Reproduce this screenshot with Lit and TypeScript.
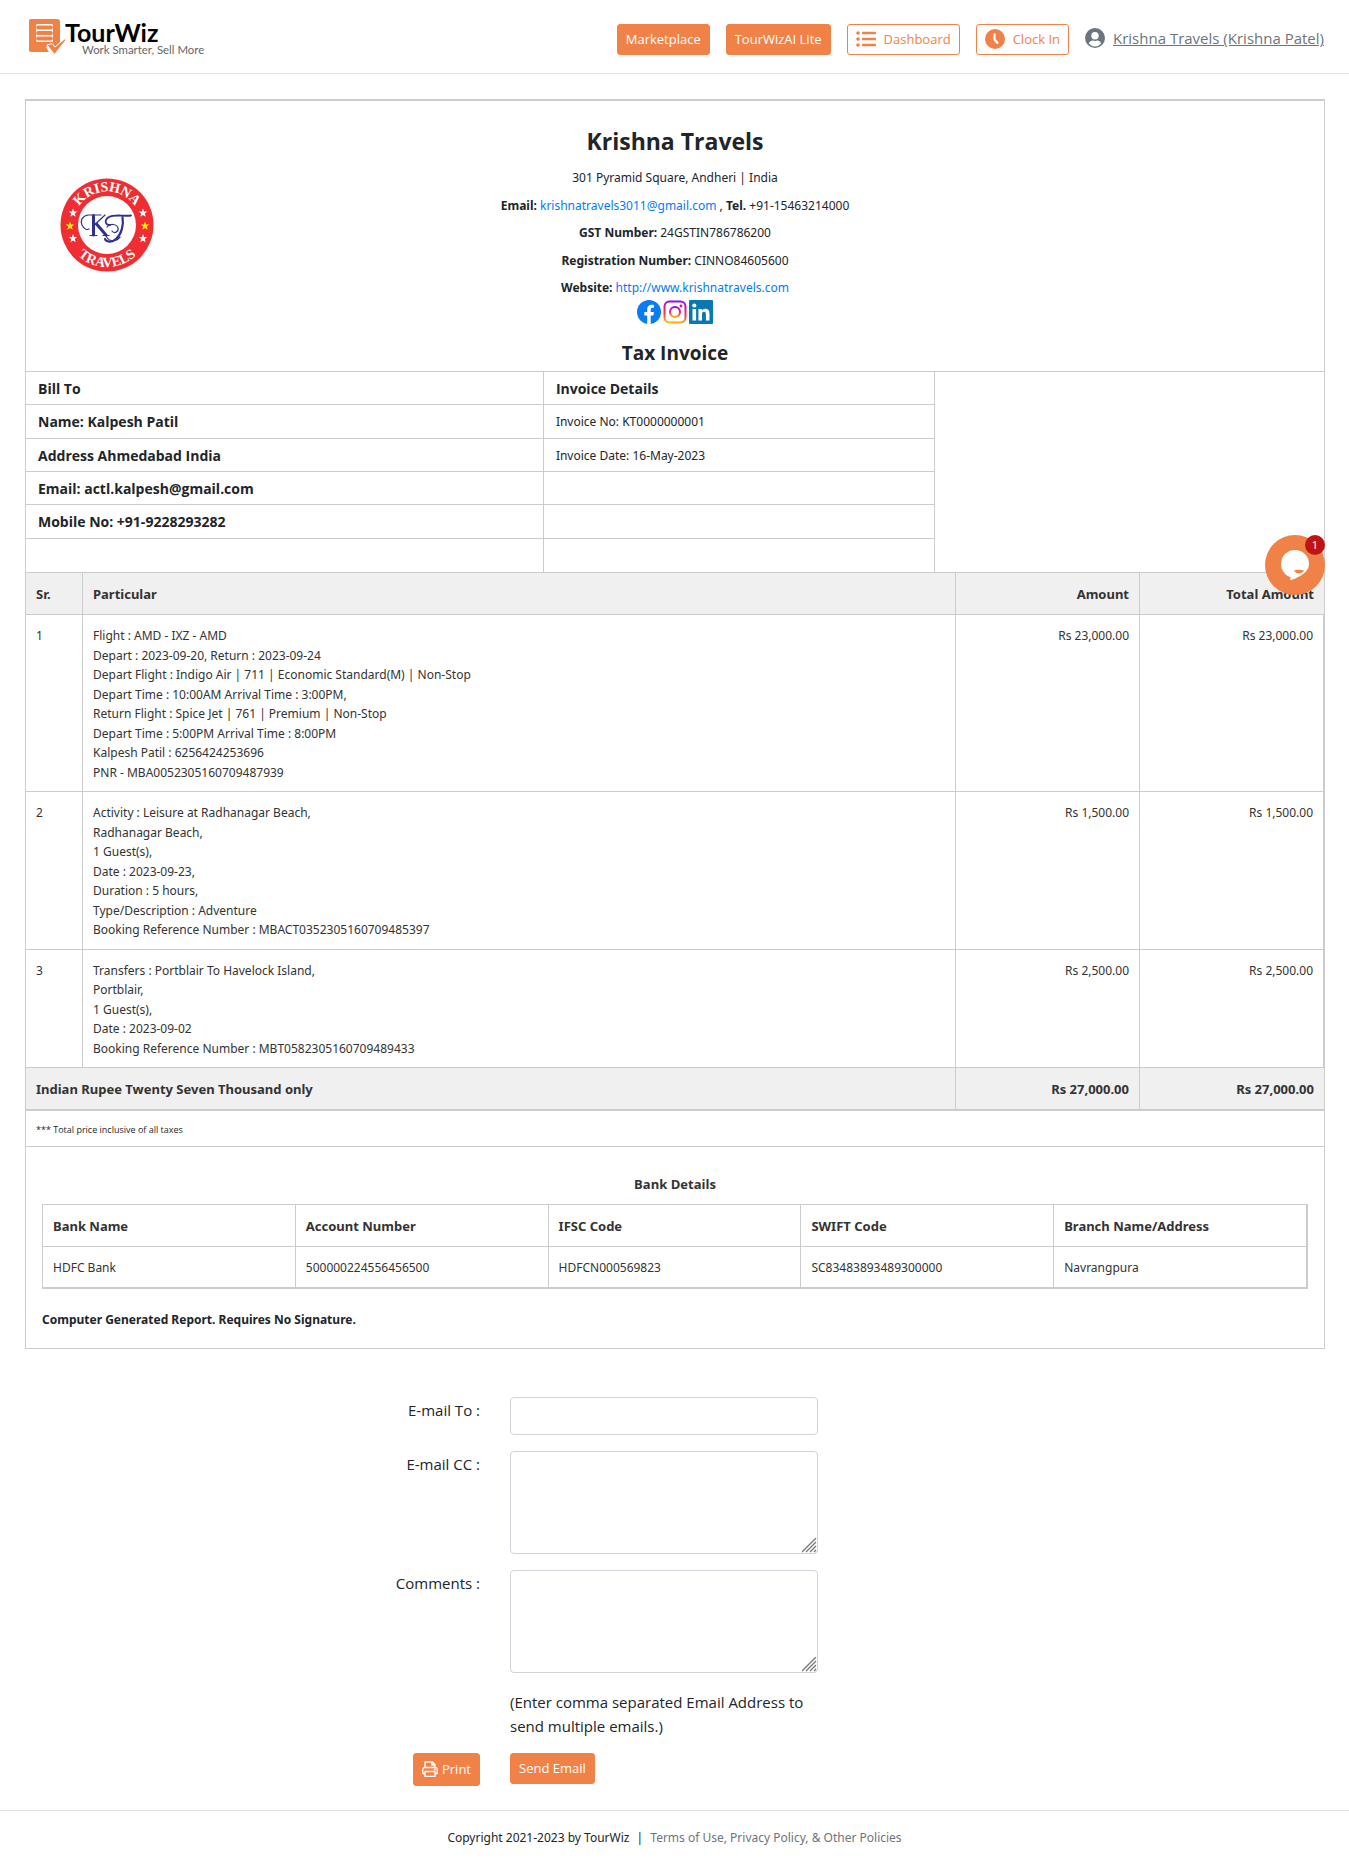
import { LitElement, html, css, svg, nothing } from "lit";
import { customElement } from "lit/decorators.js";

interface Item {
  lines: string[];
  amount: string;
  total: string;
}

const ITEMS: Item[] = [
  {
    lines: [
      "Flight : AMD - IXZ - AMD",
      "Depart : 2023-09-20, Return : 2023-09-24",
      "Depart Flight : Indigo Air | 711 | Economic Standard(M) | Non-Stop",
      "Depart Time : 10:00AM Arrival Time : 3:00PM,",
      "Return Flight : Spice Jet | 761 | Premium | Non-Stop",
      "Depart Time : 5:00PM Arrival Time : 8:00PM",
      "Kalpesh Patil : 6256424253696",
      "PNR - MBA0052305160709487939",
    ],
    amount: "Rs 23,000.00",
    total: "Rs 23,000.00",
  },
  {
    lines: [
      "Activity : Leisure at Radhanagar Beach,",
      "Radhanagar Beach,",
      "1 Guest(s),",
      "Date : 2023-09-23,",
      "Duration : 5 hours,",
      "Type/Description : Adventure",
      "Booking Reference Number : MBACT0352305160709485397",
    ],
    amount: "Rs 1,500.00",
    total: "Rs 1,500.00",
  },
  {
    lines: [
      "Transfers : Portblair To Havelock Island,",
      "Portblair,",
      "1 Guest(s),",
      "Date : 2023-09-02",
      "Booking Reference Number : MBT0582305160709489433",
    ],
    amount: "Rs 2,500.00",
    total: "Rs 2,500.00",
  },
];

const DETAILS: [string, string][] = [
  ["Name: Kalpesh Patil", "Invoice No: KT0000000001"],
  ["Address Ahmedabad India", "Invoice Date: 16-May-2023"],
  ["Email: actl.kalpesh@gmail.com", ""],
  ["Mobile No: +91-9228293282", ""],
  ["", ""],
];

const BANK: [string, string][] = [
  ["Bank Name", "HDFC Bank"],
  ["Account Number", "500000224556456500"],
  ["IFSC Code", "HDFCN000569823"],
  ["SWIFT Code", "SC83483893489300000"],
  ["Branch Name/Address", "Navrangpura"],
];

const star = (x: number, y: number, r: number, fill: string) => {
  const pts: string[] = [];
  for (let i = 0; i < 10; i++) {
    const a = -Math.PI / 2 + (i * Math.PI) / 5;
    const k = i % 2 ? r * 0.42 : r;
    pts.push(`${(x + k * Math.cos(a)).toFixed(2)},${(y + k * Math.sin(a)).toFixed(2)}`);
  }
  return svg`<polygon points=${pts.join(" ")} fill=${fill}></polygon>`;
};

const base = css`
  * {
    box-sizing: border-box;
  }
  svg {
    display: block;
    flex: none;
  }
  a {
    color: #007bff;
    text-decoration: none;
  }
  .btn {
    display: inline-flex;
    align-items: center;
    height: 31px;
    padding: 0 8px;
    border: 1px solid #f18247;
    border-radius: 3px;
    background: #f18247;
    color: #fff;
    font-family: inherit;
    font-size: 13px;
    line-height: 21px;
    white-space: nowrap;
    cursor: pointer;
  }
`;

@customElement("site-header")
export class SiteHeader extends LitElement {
  static styles = [
    base,
    css`
      :host {
        display: block;
      }
      .bar {
        display: flex;
        align-items: center;
        justify-content: space-between;
        height: 74px;
        padding: 5px 25px 0 28px;
        border-bottom: 1px solid #dee2e6;
      }
      .brand {
        margin-top: -4px;
      }
      nav {
        display: flex;
        align-items: center;
        gap: 16px;
      }
      .outline {
        gap: 8px;
        background: #fff;
        color: #f18247;
      }
      .user {
        display: flex;
        align-items: center;
        gap: 8px;
        padding-bottom: 2px;
        color: #6c757d;
        font-size: 15px;
        line-height: 24px;
      }
      .user span {
        text-decoration: underline;
      }
    `,
  ];

  render() {
    return html`
      <header class="bar">
        <a class="brand" href="#" aria-label="TourWiz home">
          <svg width="180" height="40" viewBox="0 0 180 40">
            <path
              fill="#f18247"
              fill-rule="evenodd"
              d="M3 2h26a3 3 0 0 1 3 3v20l-4 5-6-3-4 3 3 5H3a2 2 0 0 1-2-2V4a2 2 0 0 1 2-2zM9 7a2 2 0 0 0-1 1v15a2 2 0 0 0 2 2h14a1 1 0 0 0 1-1V9a2 2 0 0 0-1-2z"
            ></path>
            <path
              d="M10 10.500h13M10 16h13M10 21.500h13"
              stroke="#f18247"
              stroke-width="3.800"
              stroke-linecap="round"
            ></path>
            <path
              fill="#f18247"
              stroke="#fff"
              stroke-width="1"
              d="M19 28l5-1.500 3 3.500 9.500-8L38 23 26.500 37.500z"
            ></path>
            <text x="37" y="25" font-family="Lato" font-weight="700" font-size="25" fill="#000">TourWiz</text>
            <text x="54" y="37" font-family="Lato" font-size="11.400" fill="#666">Work Smarter, Sell More</text>
          </svg>
        </a>
        <nav>
          <button class="btn" type="button">Marketplace</button>
          <button class="btn" type="button">TourWizAI Lite</button>
          <button class="btn outline" type="button">
            <svg width="20" height="16" viewBox="0 0 20 16" fill="#f18247">
              <circle cx="2" cy="2" r="1.800"></circle>
              <circle cx="2" cy="8" r="1.800"></circle>
              <circle cx="2" cy="14" r="1.800"></circle>
              <rect x="6" y="0.700" width="14" height="2.600" rx="0.500"></rect>
              <rect x="6" y="6.700" width="14" height="2.600" rx="0.500"></rect>
              <rect x="6" y="12.700" width="14" height="2.600" rx="0.500"></rect>
            </svg>
            Dashboard
          </button>
          <button class="btn outline" type="button">
            <svg width="20" height="20" viewBox="0 0 20 20">
              <circle cx="10" cy="10" r="10" fill="#f18247"></circle>
              <path d="M9.500 4.500v6l3.500 4" fill="none" stroke="#fff" stroke-width="2.200"></path>
            </svg>
            Clock In
          </button>
          <a class="user" href="#">
            <svg width="20" height="20" viewBox="0 0 20 20">
              <circle cx="10" cy="10" r="10" fill="#6c757d"></circle>
              <circle cx="10" cy="7.700" r="3.700" fill="#fff"></circle>
              <path d="M3.800 15.600c1-2.300 2.400-3 3.900-3 1.500.6 3.100.6 4.600 0 1.500 0 2.900.7 3.900 3a8 8 0 0 1-12.400 0z" fill="#fff"></path>
            </svg>
            <span>Krishna Travels (Krishna Patel)</span>
          </a>
        </nav>
      </header>
    `;
  }
}

@customElement("company-header")
export class CompanyHeader extends LitElement {
  static styles = [
    base,
    css`
      :host {
        display: block;
      }
      .top {
        display: grid;
        grid-template-columns: 1fr 2fr 1fr;
        align-items: center;
        height: 271px;
        border-bottom: 1px solid #ccc;
      }
      .logo {
        padding: 0 0 22px 34px;
      }
      .center {
        display: flex;
        flex-direction: column;
        align-items: center;
        align-self: start;
        padding-top: 21px;
        text-align: center;
      }
      h1,
      h2,
      p {
        margin: 0;
      }
      h1 {
        margin-bottom: 3px;
        font-size: 23px;
        line-height: 39px;
      }
      h2 {
        margin-top: 17px;
        font-size: 19px;
        line-height: 24px;
      }
      p {
        font-family: "Noto Sans", sans-serif;
        font-size: 12px;
        line-height: 2.300;
      }
      .social {
        display: flex;
        gap: 2px;
        margin-top: -2px;
      }
    `,
  ];

  render() {
    return html`
      <div class="top">
        <div class="logo">
          <svg width="94" height="94" viewBox="0 0 94 94">
            <circle cx="47" cy="47" r="46.500" fill="#ee2e33"></circle>
            <circle cx="47" cy="47" r="29" fill="#fff"></circle>
            <defs>
              <path id="arc-top" d="M13.500 47a33.500 33.500 0 0 1 67 0"></path>
              <path id="arc-bottom" d="M5 47a42 42 0 0 0 84 0"></path>
            </defs>
            <g font-family="Liberation Serif" font-weight="700" font-size="14" fill="#fff" text-anchor="middle">
              <text><textPath href="#arc-top" startOffset="50%">KRISHNA</textPath></text>
              <text><textPath href="#arc-bottom" startOffset="50%">TRAVELS</textPath></text>
            </g>
            ${star(13, 35, 4.500, "#fff")} ${star(10, 48, 4.500, "#fff200")} ${star(13, 60.500, 4.500, "#fff")}
            ${star(83, 35, 4.500, "#fff")} ${star(85, 48, 4.500, "#fff200")} ${star(83, 60.500, 4.500, "#fff")}
            <g fill="none" stroke="#2e3192" stroke-linecap="round">
              <path d="M33.500 37.500V57" stroke-width="3"></path>
              <path d="M30 57.500h7M43 57.500h6" stroke-width="1.200"></path>
              <path d="M45 37 35 46.500" stroke-width="1.200"></path>
              <path d="M36.500 46 46 57" stroke-width="3"></path>
              <path d="M41 37H28c-6 1-8 6-6 10s5 5 7 4" stroke-width="1.200"></path>
              <path d="M71 37.500c-7 1-17-1.500-22 1.500s-4 8 1 8" stroke-width="1.800"></path>
              <path d="M62.500 39c1.500 8-1 17-6.500 22-4 4-10 3-11 0" stroke-width="2.200"></path>
              <path d="M46 57c1 6 9 8 14 2M47 49c3-4 10-3 11 1s-4 6-6 3" stroke-width="1.200"></path>
            </g>
          </svg>
        </div>
        <div class="center">
          <h1>Krishna Travels</h1>
          <p>301 Pyramid Square, Andheri | India</p>
          <p>
            <b>Email:</b> <a href="mailto:krishnatravels3011@gmail.com">krishnatravels3011@gmail.com</a> ,
            <b>Tel.</b> +91-15463214000
          </p>
          <p><b>GST Number:</b> 24GSTIN786786200</p>
          <p><b>Registration Number:</b> CINNO84605600</p>
          <p><b>Website:</b> <a href="http://www.krishnatravels.com">http://www.krishnatravels.com</a></p>
          <div class="social">
            <a href="#" aria-label="Facebook">
              <svg width="24" height="24" viewBox="0 0 24 24">
                <circle cx="12" cy="12" r="12" fill="#0a7cf2"></circle>
                <path
                  fill="#fff"
                  d="M10.200 24v-8.500H7.300V12h2.900V9.300c0-3 1.700-4.600 4.400-4.600 1.200 0 2.300.2 2.300.2v2.900h-1.400c-1.400 0-1.800.8-1.800 1.700V12H17l-.6 3.500h-2.700V24z"
                ></path>
              </svg>
            </a>
            <a href="#" aria-label="Instagram">
              <svg width="24" height="24" viewBox="0 0 24 24">
                <defs>
                  <linearGradient id="ig" x1="0.400" y1="1" x2="0.500" y2="0">
                    <stop offset="0" stop-color="#ffb307"></stop>
                    <stop offset="0.350" stop-color="#fa3c50"></stop>
                    <stop offset="0.700" stop-color="#e0109b"></stop>
                    <stop offset="1" stop-color="#8a10f0"></stop>
                  </linearGradient>
                </defs>
                <g fill="none" stroke="url(#ig)" stroke-width="2">
                  <rect x="1.500" y="1.500" width="21" height="21" rx="5"></rect>
                  <circle cx="12" cy="12" r="5"></circle>
                </g>
                <circle cx="18" cy="6" r="1.400" fill="#e0109b"></circle>
              </svg>
            </a>
            <a href="#" aria-label="LinkedIn">
              <svg width="24" height="24" viewBox="0 0 24 24">
                <rect width="24" height="24" rx="1" fill="#0a77b5"></rect>
                <g fill="#fff">
                  <circle cx="5.300" cy="5.500" r="2.100"></circle>
                  <rect x="3.500" y="9" width="3.600" height="11.500"></rect>
                  <path
                    d="M9.400 9h3.400v1.600c.6-1.100 1.800-1.900 3.400-1.900 3.500 0 4.300 2.300 4.300 5.400v6.400h-3.600v-5.700c0-1.400 0-3-1.900-3s-2 1.400-2 2.900v5.800H9.400z"
                  ></path>
                </g>
              </svg>
            </a>
          </div>
          <h2>Tax Invoice</h2>
        </div>
      </div>
    `;
  }
}

@customElement("invoice-tables")
export class InvoiceTables extends LitElement {
  static styles = [
    base,
    css`
      :host {
        display: block;
      }
      table {
        width: 100%;
        table-layout: fixed;
        border-spacing: 0;
        text-align: left;
      }
      th,
      td {
        border: 0 solid #ccc;
        border-width: 0 1px 1px 0;
        vertical-align: top;
      }
      .details {
        display: grid;
        grid-template-columns: 7fr 3fr;
        border-bottom: 1px solid #ccc;
      }
      .details table {
        height: 200px;
      }
      .details .bill {
        width: 57%;
      }
      .details th,
      .details td {
        height: 33px;
        padding: 2px 12px 0;
        vertical-align: middle;
        font-size: 14px;
        line-height: 20px;
        font-weight: 700;
      }
      .details td + td {
        font-family: "Noto Sans", sans-serif;
        font-size: 12px;
        font-weight: 400;
      }
      .details tr:last-child td {
        border-bottom: 0;
      }
      .grid {
        color: #333;
      }
      .grid th,
      .grid td {
        padding: 11px 10px 9px;
        font-family: "Noto Sans", sans-serif;
        font-size: 12px;
        line-height: 1.625;
      }
      .grid th {
        font-size: 13px;
        line-height: 21px;
      }
      .items .sr {
        width: 57px;
      }
      .items .money {
        width: 184px;
      }
      .items .num {
        text-align: right;
      }
      .items thead th,
      .items tfoot th {
        background: #f0f0f0;
      }
      .items thead th:last-child,
      .items tfoot th:last-child {
        border-right: 0;
      }
      .line {
        display: block;
      }
      .note {
        margin: 0;
        padding: 10px 10px 7px;
        border: 0 solid #ccc;
        border-width: 1px 0;
        font-size: 9px;
        line-height: 18px;
      }
      .bank {
        padding: 27px 16px 18px;
      }
      .bank h3 {
        margin: 0;
        padding-bottom: 9px;
        color: #333;
        font-size: 13px;
        line-height: 21px;
        text-align: center;
      }
      .bank table {
        border: 1px solid #ccc;
      }
      .bank p {
        margin: 21px 0 0;
        font-family: "Noto Sans", sans-serif;
        font-size: 12px;
        line-height: 20px;
        font-weight: 700;
      }
    `,
  ];

  render() {
    return html`
      <div class="details">
        <table>
          <colgroup>
            <col class="bill" />
            <col />
          </colgroup>
          <tbody>
            <tr>
              <th>Bill To</th>
              <th>Invoice Details</th>
            </tr>
            ${DETAILS.map(([a, b]) => html`<tr><td>${a || nothing}</td><td>${b || nothing}</td></tr>`)}
          </tbody>
        </table>
      </div>
      <table class="grid items">
        <colgroup>
          <col class="sr" />
          <col />
          <col class="money" />
          <col class="money" />
        </colgroup>
        <thead>
          <tr>
            <th>Sr.</th>
            <th>Particular</th>
            <th class="num">Amount</th>
            <th class="num">Total Amount</th>
          </tr>
        </thead>
        <tbody>
          ${ITEMS.map(
            (item, i) => html`
              <tr>
                <td>${i + 1}</td>
                <td>${item.lines.map((l) => html`<span class="line">${l}</span>`)}</td>
                <td class="num">${item.amount}</td>
                <td class="num">${item.total}</td>
              </tr>
            `
          )}
        </tbody>
        <tfoot>
          <tr>
            <th colspan="2">Indian Rupee Twenty Seven Thousand only</th>
            <th class="num">Rs 27,000.00</th>
            <th class="num">Rs 27,000.00</th>
          </tr>
        </tfoot>
      </table>
      <p class="note">*** Total price inclusive of all taxes</p>
      <section class="bank">
        <h3>Bank Details</h3>
        <table class="grid">
          <thead>
            <tr>${BANK.map(([h]) => html`<th>${h}</th>`)}</tr>
          </thead>
          <tbody>
            <tr>${BANK.map(([, v]) => html`<td>${v}</td>`)}</tr>
          </tbody>
        </table>
        <p>Computer Generated Report. Requires No Signature.</p>
      </section>
    `;
  }
}

@customElement("email-form")
export class EmailForm extends LitElement {
  static styles = [
    base,
    css`
      :host {
        display: block;
      }
      form {
        display: grid;
        grid-template-columns: minmax(0, 480fr) minmax(0, 308fr) minmax(0, 501fr);
        gap: 16px 30px;
        font-size: 15px;
        line-height: 24px;
      }
      label,
      .print {
        grid-column: 1;
        justify-self: end;
      }
      label {
        padding-top: 1px;
      }
      input,
      textarea,
      .hint,
      .send {
        grid-column: 2;
      }
      input,
      textarea {
        display: block;
        width: 100%;
        height: 38px;
        margin: 0;
        padding: 6px 12px;
        border: 1px solid #ced4da;
        border-radius: 4px;
        background: #fff;
        font: inherit;
      }
      textarea {
        height: 103px;
        resize: both;
      }
      textarea::-webkit-resizer {
        background: url("data:image/svg+xml,%3Csvg xmlns='http://www.w3.org/2000/svg' width='15' height='15'%3E%3Cpath d='M0 14L14 0M4 14L14 4M8 14L14 8M12 14L14 12' stroke='%23777' stroke-width='1.3'/%3E%3C/svg%3E")
          no-repeat right bottom;
      }
      .hint {
        margin: 1px 0 0;
      }
      .print,
      .send {
        margin-top: -1px;
      }
      .print {
        gap: 4px;
        height: 33px;
      }
      .send {
        justify-self: start;
      }
    `,
  ];

  render() {
    return html`
      <form @submit=${(e: Event) => e.preventDefault()}>
        <label for="to">E-mail To :</label>
        <input id="to" type="text" />
        <label for="cc">E-mail CC :</label>
        <textarea id="cc"></textarea>
        <label for="comments">Comments :</label>
        <textarea id="comments"></textarea>
        <p class="hint">(Enter comma separated Email Address to send multiple emails.)</p>
        <button class="btn print" type="button">
          <svg width="16" height="16" viewBox="0 0 16 16" fill="none" stroke="#fff" stroke-width="1.300">
            <path d="M3 6V1h7.500L13 3.500V6M10 1v3h3"></path>
            <path d="M3 12.500H.8V8.500A2 2 0 0 1 2.800 6.500h10.400a2 2 0 0 1 2 2v4H13"></path>
            <path d="M3 10.500h10v5H3z"></path>
            <circle cx="12.800" cy="8.500" r="0.400"></circle>
          </svg>
          Print
        </button>
        <button class="btn send" type="submit">Send Email</button>
      </form>
    `;
  }
}

@customElement("chat-launcher")
export class ChatLauncher extends LitElement {
  static styles = [
    base,
    css`
      :host {
        position: absolute;
        top: 535px;
        right: 24px;
      }
      button {
        position: relative;
        display: flex;
        align-items: center;
        justify-content: center;
        width: 60px;
        height: 60px;
        padding: 0;
        border: 0;
        border-radius: 50%;
        background: #f18247;
        font-family: inherit;
        cursor: pointer;
      }
      .badge {
        position: absolute;
        top: 0;
        right: 0;
        width: 20px;
        height: 20px;
        border-radius: 50%;
        background: #c01414;
        color: #fff;
        font-size: 11px;
        line-height: 20px;
        text-align: center;
      }
    `,
  ];

  render() {
    return html`
      <button type="button" aria-label="Open chat">
        <svg width="30" height="30" viewBox="0 0 30 30">
          <path
            fill="#fff"
            d="M15 0a14 14 0 0 1 14 14c0 8-9 13-19 16.500l.6-3.200A14 14 0 0 1 15 0z"
          ></path>
          <path fill="#f18247" d="M14 20.500c3-1 7-1 10 0-1.500 3.500-8 4-10 0z"></path>
        </svg>
        <span class="badge">1</span>
      </button>
    `;
  }
}

@customElement("app-root")
export class AppRoot extends LitElement {
  static styles = [
    base,
    css`
      :host {
        position: relative;
        display: block;
        color: #212529;
        font-family: "Open Sans", "Noto Sans", sans-serif;
        background: #fff;
      }
      .invoice {
        margin: 25px 24px 48px 25px;
        border: 1px solid #ccc;
        border-top-width: 2px;
      }
      footer {
        margin-top: 24px;
        padding: 16px 25px 15px;
        border-top: 1px solid #dee2e6;
        font-family: "Noto Sans", sans-serif;
        font-size: 12px;
        line-height: 21px;
        text-align: center;
      }
      .sep {
        margin: 0 4px;
      }
      footer a {
        color: #6c757d;
      }
    `,
  ];

  render() {
    return html`
      <site-header></site-header>
      <main>
        <article class="invoice">
          <company-header></company-header>
          <invoice-tables></invoice-tables>
        </article>
        <email-form></email-form>
      </main>
      <footer>
        Copyright 2021-2023 by TourWiz <span class="sep">|</span>
        <a href="#">Terms of Use, Privacy Policy, &amp; Other Policies</a>
      </footer>
      <chat-launcher></chat-launcher>
    `;
  }
}
